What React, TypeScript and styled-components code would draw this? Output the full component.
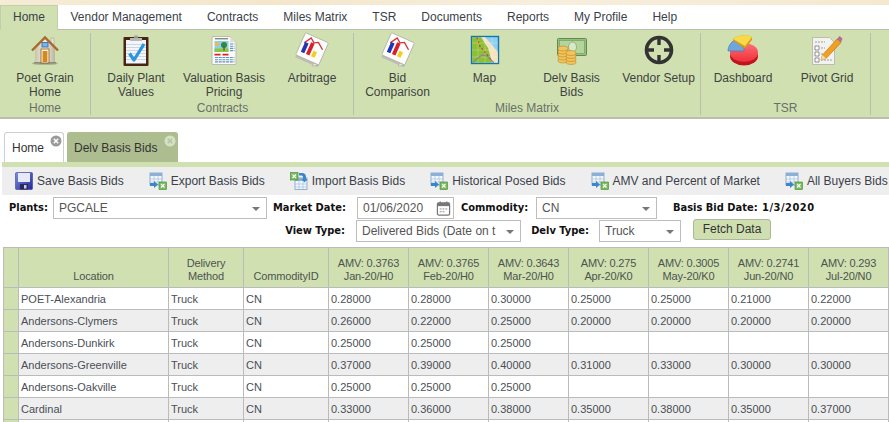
import React from "react";
import styled, { createGlobalStyle } from "styled-components";

const Global = createGlobalStyle`
  html, body { margin: 0; padding: 0; background: #fff; overflow: hidden; }
  body { font-family: "Liberation Sans", Arial, sans-serif; font-size: 12px; color: #333; }
`;
const Page = styled.div`width: 889px; height: 422px; overflow: hidden; position: relative;`;
const TopStrip = styled.div`height: 5px; background: linear-gradient(90deg,#f6ecd6,#f3e6cb 30%,#f7eedc 60%,#f4e8d0);`;
const MenuBar = styled.nav`display: flex; height: 25px; background: #fff; border-bottom: 1px solid #b9bfb0; box-sizing: border-box;`;
const MenuItem = styled.div<{ $active?: boolean }>`
  padding: 0 12.5px; line-height: 24px; color: #3a3f4a; height: ${p => p.$active ? 25 : 24}px;
  background: ${p => p.$active ? "#d1e0b1" : "transparent"};
  ${p => p.$active ? "border: 1px solid #c3cfab; border-bottom: 0; box-sizing: border-box; line-height: 22px; padding: 0 12px;" : ""}
`;
const Ribbon = styled.div`display: flex; height: 89px; box-sizing: border-box; background: #d1e0b1; border-bottom: 2px solid #b8bfb0;`;
const Group = styled.section<{ $w: number; $pl: number }>`
  width: ${p => p.$w}px; padding-left: ${p => p.$pl}px; box-sizing: border-box; display: flex; flex-direction: column;
  border-right: 1px solid #b7c0b0; margin: 3px 0; height: 82px; flex: none;
`;
const Items = styled.div`display: flex; height: 68px;`;
const Item = styled.div<{ $w: number }>`width: ${p => p.$w}px; flex: none; display: flex; flex-direction: column; align-items: center; text-align: center; line-height: 14px; color: #3d4340; white-space: pre-line;`;
const IconSlot = styled.div`height: 32px; width: 32px; margin: 1px 0 5px; svg { display: block; overflow: visible; }`;
const GroupLabel = styled.div`text-align: center; color: #687068; line-height: 14px;`;

const TabStrip = styled.div`display: flex; gap: 3px; padding: 13px 0 0 4px; height: 43px; box-sizing: border-box;`;
const DocTab = styled.div<{ $active?: boolean }>`
  position: relative; height: 30px; box-sizing: border-box; border-radius: 3px 3px 0 0; line-height: 30px; color: #333;
  padding: ${p => p.$active ? "0 19px 0 7px" : "0 20px 0 6px"};
  background: ${p => p.$active ? "#fff" : "#adbd8f"};
  border: 1px solid ${p => p.$active ? "#cfcfcf" : "#adbd8f"}; border-bottom: 0;
`;
const CloseDot = styled.span`
  position: absolute; right: 1px; top: 2px; width: 12px; height: 12px;
  svg { display: block; }
`;
const Panel = styled.div`margin-left: 2px; border-top: 5px solid #d1e0b1;`;
const Toolbar = styled.div`height: 28px; background: #eee; display: flex; align-items: center; padding-left: 13px; gap: 25px; white-space: nowrap; color: #3a3f4a;`;
const ToolButton = styled.div`display: flex; align-items: center; gap: 4px; flex: none; svg { display: block; }`;
const Filters = styled.div`margin-left: -2px; padding-top: 1px; height: 52px; box-sizing: border-box;`;
const FilterRow = styled.div<{ $pl: number; $h: number }>`display: flex; align-items: center; height: ${p => p.$h}px; padding-left: ${p => p.$pl}px; white-space: nowrap;`;
const FieldLabel = styled.label<{ $ml?: number; $w: number }>`
  font-family: "DejaVu Sans Condensed", "DejaVu Sans", sans-serif; font-weight: 700; font-size: 11px; color: #111;
  margin-left: ${p => p.$ml || 0}px; width: ${p => p.$w}px; flex: none; text-align: right; white-space: nowrap;
`;
const Select = styled.div<{ $w: number; $ml: number }>`
  width: ${p => p.$w}px; height: 22px; margin-left: ${p => p.$ml}px; box-sizing: border-box; border: 1px solid #bdbdbd; background: #fff; flex: none;
  position: relative; padding-left: 5px; line-height: 20px; color: #555; white-space: nowrap;
`;
const Caret = styled.i`
  position: absolute; right: 6px; top: 9px; width: 0; height: 0; border-left: 4px solid transparent; border-right: 4px solid transparent; border-top: 4px solid #777;
`;
const CalendarSlot = styled.span`position: absolute; right: 2px; top: 2px; svg { display: block; }`;
const BidDate = styled.span`font-family: "DejaVu Sans Condensed", "DejaVu Sans", sans-serif; font-weight: 700; font-size: 11px; letter-spacing: .5px; color: #111; margin-left: 6px;`;
const FetchButton = styled.button`
  width: 78px; height: 21px; margin: -3px 0 0 12px; padding: 0; border: 1px solid #a9b999; border-radius: 3px; background: #cfdfb0; color: #333;
  font: 12px "Liberation Sans", Arial, sans-serif;
`;

const Table = styled.table`
  border-collapse: collapse; table-layout: fixed; width: 885px; margin: 0 0 0 3px; font-family: "Liberation Sans", Arial, sans-serif; font-size: 11px;
`;
const Th = styled.th`
  height: 40px; box-sizing: border-box; padding: 0 2px 4px; background: #d1e0b1; border: 1px solid #bbb; font-weight: 400; color: #4c5450; line-height: 13px; letter-spacing: -.15px; vertical-align: bottom; text-align: center; white-space: pre-line;
`;
const Row = styled.tr<{ $odd: boolean }>`background: ${p => p.$odd ? "#eee" : "#fff"};`;
const Td = styled.td`height: 22px; box-sizing: border-box; padding: 1px 2px 0; border: 1px solid #bbb; color: #4a4f55; white-space: nowrap; overflow: hidden;`;
const Marker = styled.td`background: #d1e0b1; border: 1px solid #bbb; padding: 0;`;

const HomeIcon = () => (
  <svg width="32" height="32" viewBox="0 0 32 32">
    <defs><linearGradient id="wall" x1="0" x2="1"><stop offset="0" stopColor="#c8c3ae" /><stop offset=".5" stopColor="#f4f0e0" /><stop offset="1" stopColor="#b9b49e" /></linearGradient></defs>
    <rect x="22" y="4" width="3" height="8" fill="#e6e4d8" stroke="#a8a593" strokeWidth=".6" />
    <ellipse cx="16" cy="29.5" rx="13" ry="1.6" fill="#9aa38a" opacity=".7" />
    <path d="M6 14 16 5l10 9v15H6z" fill="url(#wall)" />
    <path d="M3 16.5 16 3.5l13 13" fill="none" stroke="#a8692a" strokeWidth="2.4" />
    <path d="M5 28h22v1.6H5z" fill="#8d8b7a" />
    <rect x="13" y="8.5" width="6" height="4.5" fill="#7fb2e6" stroke="#3f77b5" />
    <rect x="12" y="15" width="8" height="14" fill="#fff2d6" stroke="#8a5a20" strokeWidth=".8" />
    <rect x="13.6" y="17" width="4.8" height="11" fill="#d08a20" />
  </svg>
);
const ClipboardIcon = () => (
  <svg width="32" height="32" viewBox="0 0 32 32">
    <rect x="3.5" y="3" width="25" height="29" rx="1" fill="#4a2412" />
    <rect x="6" y="6" width="20" height="23.5" fill="#f2f5fa" />
    <path d="M6 10.5h20M6 13.5h20M6 16.5h20M6 19.5h20M6 22.5h20M6 25.5h20" stroke="#c3cddc" strokeWidth=".8" />
    <path d="M10 4h12v3H10z" fill="#b8b8b8" /><rect x="14" y="1.5" width="4" height="3" rx="1" fill="#9c9c9c" />
    <path d="M9.5 19.5 14 26 24 10" fill="none" stroke="#2b94dc" strokeWidth="3.2" strokeLinejoin="round" />
  </svg>
);
const ReportIcon = () => (
  <svg width="32" height="32" viewBox="0 0 32 32">
    <path d="M4 2.5h18L28 8.5v22H4z" fill="#fbfbf8" stroke="#b9bcae" />
    <path d="M22 2.5v6h6z" fill="#dfe2d8" />
    <path d="M7 4.7h13" stroke="#888" strokeWidth="1.4" />
    <rect x="6.5" y="7" width="14" height="11" fill="#8cd0ee" />
    <rect x="6.5" y="14.5" width="14" height="3.5" fill="#8cc646" />
    <circle cx="9" cy="10" r="2" fill="#f6b63c" />
    <circle cx="16" cy="11" r="3" fill="#2f8a3a" /><rect x="15.4" y="13" width="1.3" height="3.5" fill="#7a4a20" />
    <path d="M22 10h4.5M22 12.2h4.5M22 14.4h4.5M22 16.6h4.5M7 23.5h19.5M7 25.7h19.5M7 27.9h19.5" stroke="#5f93bf" strokeWidth="1.1" strokeDasharray="3 .7" />
    <path d="M6.5 20.6h6M14.5 20.6h6" stroke="#e02020" strokeWidth="1.6" />
  </svg>
);
const ChartNoteIcon = () => (
  <svg width="32" height="32" viewBox="0 0 32 32">
    <g transform="rotate(24 16 16) translate(16 16) scale(1.12) translate(-16 -16)">
      <rect x="5" y="6" width="22" height="22" fill="#bdbdb4" />
      <rect x="4.4" y="4.2" width="22.5" height="21.6" rx="1" fill="#fdfdfb" stroke="#b0b0a8" strokeWidth=".7" />
      <path d="M7 13 11 6.5l4 3 3.5-2 6 4.5" fill="none" stroke="#d6323a" strokeWidth="1.2" />
      <path d="M9.2 12v9.500" stroke="#1f35b8" strokeWidth="3.400" />
      <path d="M14.2 10v11.500" stroke="#d9202a" strokeWidth="3.400" />
      <path d="M19.2 16v5.500" stroke="#f2cf1e" strokeWidth="3.400" />
      <path d="M22 26h5l-5 3z" fill="#e8e8e2" stroke="#a9a9a0" strokeWidth=".5" />
    </g>
  </svg>
);
const MapIcon = () => (
  <svg width="32" height="32" viewBox="0 0 32 32">
    <rect x="2.5" y="2.5" width="27" height="27" fill="#8fd0f0" stroke="#1474b4" strokeWidth="1.4" />
    <path d="M3.2 3.2h9l7 11 4 14.6H3.2z" fill="#8dbf32" />
    <path d="M12.2 3.2h4l8 9 4.6 6v10.6H23.200l-4-14.600z" fill="#f4e3bd" />
    <path d="M8 3.500l3 9 6 7 5 6" fill="none" stroke="#d8262c" strokeWidth="1.2" strokeDasharray="2 2" />
    <path d="M9 3v26M16 3v26M23 3v26M3 9h26M3 16h26M3 23h26" stroke="#fff" strokeWidth=".4" opacity=".6" />
    <path d="M3.500 28.500 13 21l5 1 7 7" fill="none" stroke="#8a8d88" strokeWidth="1.400" />
  </svg>
);
const CashIcon = () => (
  <svg width="32" height="32" viewBox="0 0 32 32">
    <rect x="1.500" y="4.500" width="29" height="17" rx="1" fill="#97c07a" stroke="#5f8a54" />
    <rect x="3.500" y="6.500" width="25" height="13" fill="#b6d59c" stroke="#6f9a60" strokeWidth=".6" />
    <ellipse cx="16.500" cy="13" rx="4" ry="5" fill="#d9e9c8" stroke="#6f9a60" strokeWidth=".6" />
    <g fill="#f2c45c" stroke="#b98522" strokeWidth=".6">
      <ellipse cx="7" cy="26.500" rx="5" ry="2.400" /><ellipse cx="7" cy="23.500" rx="5" ry="2.400" /><ellipse cx="7" cy="20.500" rx="5" ry="2.400" /><ellipse cx="7" cy="17.500" rx="5" ry="2.400" /><ellipse cx="7" cy="14.500" rx="5" ry="2.400" />
      <ellipse cx="15" cy="28" rx="5" ry="2.400" /><ellipse cx="15" cy="25" rx="5" ry="2.400" /><ellipse cx="15" cy="22" rx="5" ry="2.400" /><ellipse cx="15" cy="19" rx="5" ry="2.400" />
    </g>
  </svg>
);
const TargetIcon = () => (
  <svg width="32" height="32" viewBox="0 0 32 32">
    <circle cx="16" cy="16" r="12.500" fill="none" stroke="#333" strokeWidth="3.600" />
    <path d="M16 5v6M16 21v6M5 16h6M21 16h6" stroke="#333" strokeWidth="3.400" />
  </svg>
);
const PieIcon = () => (
  <svg width="32" height="32" viewBox="0 0 32 32">
    <defs><linearGradient id="pie" x1="0" x2="0" y1="0" y2="1"><stop offset="0" stopColor="#ff7078" /><stop offset="1" stopColor="#ee3038" /></linearGradient></defs>
    <ellipse cx="17" cy="22" rx="14" ry="9.500" fill="#c2141e" />
    <ellipse cx="17" cy="18.500" rx="14" ry="9.500" fill="url(#pie)" />
    <path d="M1 17c0-5 3-9 7-11l9 8v3z" fill="#6fa5d8" stroke="#3b78b5" strokeWidth=".6" />
    <path d="M6 5c4-4 14-5 19-2v3l-7 8.500L6 6.500z" fill="#d79f16" />
    <path d="M6 5c4-4 14-5 19-2l-7 9z" fill="#f9d948" />
  </svg>
);
const PivotIcon = () => (
  <svg width="32" height="32" viewBox="0 0 32 32">
    <path d="M1.500 3.500h17l5 5v22h-22z" fill="#f2f3ee" stroke="#babdb0" />
    <path d="M4 12h4v4H4zM4 18h4v4H4zM4 24h4v4H4z" fill="#fff" stroke="#777" strokeWidth=".8" />
    <path d="M10 14h4M10 20h3M10 26h11M4 8h10" stroke="#888" strokeWidth=".8" strokeDasharray="2 1" />
    <path d="M11.500 21 26 5l4 3.500L15 24.500 10 26z" fill="#f2a11e" stroke="#b8660e" strokeWidth=".6" />
    <path d="M11.500 21 10 26l5-1.500z" fill="#f2dcb6" />
    <path d="M26 5l2.500-3 3 2.500-1.500 4z" fill="#b56a9a" />
  </svg>
);
const SaveIcon = () => (
  <svg width="18" height="18" viewBox="0 0 18 18">
    <defs><linearGradient id="fl" x1="0" x2="1" y1="0" y2="1"><stop offset="0" stopColor="#7a8fe0" /><stop offset="1" stopColor="#23279a" /></linearGradient></defs>
    <rect x=".5" y=".5" width="17" height="17" rx="1" fill="url(#fl)" stroke="#3c4294" strokeWidth=".6" />
    <rect x="3" y="1" width="12" height="9" fill="#e6e9f8" />
    <rect x="5" y="12" width="8" height="5.500" fill="#2a2a5a" /><rect x="9" y="13" width="2.500" height="3.500" fill="#ccd" />
  </svg>
);
const ExportIcon = () => (
  <svg width="18" height="18" viewBox="0 0 18 18">
    <rect x="1" y="1" width="12" height="12" fill="#f2f7fc" stroke="#7a9dc4" strokeWidth=".8" />
    <rect x="1" y="1" width="12" height="3" fill="#88b0d8" />
    <path d="M5 1v12M9 1v12M1 7h12M1 10h12" stroke="#9fb9d6" strokeWidth=".6" />
    <path d="M1 11h4V9l4 3.500L5 16v-2H1z" fill="#3a86cc" />
    <rect x="10" y="10" width="7.500" height="7.500" fill="#7cbb5c" stroke="#3e8a34" strokeWidth=".6" />
    <path d="m12 12 3.500 3.500m0-3.500L12 15.500" stroke="#fff" strokeWidth="1.100" />
  </svg>
);
const ImportIcon = () => (
  <svg width="18" height="18" viewBox="0 0 18 18">
    <rect x="5" y="6" width="12" height="11.500" fill="#f2f7fc" stroke="#7a9dc4" strokeWidth=".8" />
    <rect x="5" y="6" width="12" height="3" fill="#88b0d8" />
    <path d="M9 6v11M13 6v11M5 12h12M5 15h12" stroke="#9fb9d6" strokeWidth=".6" />
    <rect x=".5" y=".5" width="7.500" height="7.500" fill="#7cbb5c" stroke="#3e8a34" strokeWidth=".6" />
    <path d="m2.500 2.500 3.500 3.500m0-3.500L2.500 6" stroke="#fff" strokeWidth="1.100" />
    <path d="M9 1h3c3 0 4 2 4 4v2l1.500 0-3 3.500-3-3.500H13V5c0-1-1-1.500-2-1.500H9z" fill="#3a86cc" />
  </svg>
);
const Calendar = () => (
  <svg width="15" height="16" viewBox="0 0 16 16">
    <rect x="1.500" y="2.500" width="13" height="13" rx="1.500" fill="#fff" stroke="#777" strokeWidth="1.300" />
    <rect x="1.500" y="2.500" width="13" height="3.500" fill="#777" />
    <path d="M4.500 1v3M11.500 1v3" stroke="#777" strokeWidth="1.400" />
    <path d="M4 9h2M7 9h2M10 9h2M4 12h2M7 12h2" stroke="#888" />
  </svg>
);
const CloseIcon = ({ light }: { light?: boolean }) => (
  <svg width="12" height="12" viewBox="0 0 12 12">
    <circle cx="6" cy="6" r="5.500" fill={light ? "#d5e1c2" : "#9a9a9a"} />
    <path d="m3.800 3.800 4.400 4.400m0-4.400L3.800 8.200" stroke={light ? "#b4c49c" : "#fff"} strokeWidth="1.400" />
  </svg>
);

const menu = ["Home", "Vendor Management", "Contracts", "Miles Matrix", "TSR", "Documents", "Reports", "My Profile", "Help"];
const groups = [
  { label: "Home", w: 91, pl: 0, iw: 90, items: [{ t: "Poet Grain\nHome", I: HomeIcon }] },
  { label: "Contracts", w: 263, pl: 1, iw: 88, items: [{ t: "Daily Plant\nValues", I: ClipboardIcon }, { t: "Valuation Basis\nPricing", I: ReportIcon }, { t: "Arbitrage", I: ChartNoteIcon }] },
  { label: "Miles Matrix", w: 347, pl: 0, iw: 87, items: [{ t: "Bid\nComparison", I: ChartNoteIcon }, { t: "Map", I: MapIcon }, { t: "Delv Basis\nBids", I: CashIcon }, { t: "Vendor Setup", I: TargetIcon }] },
  { label: "TSR", w: 170, pl: 0, iw: 84, items: [{ t: "Dashboard", I: PieIcon }, { t: "Pivot Grid", I: PivotIcon }] },
];
const tools = [
  { t: "Save Basis Bids", I: SaveIcon }, { t: "Export Basis Bids", I: ExportIcon }, { t: "Import Basis Bids", I: ImportIcon },
  { t: "Historical Posed Bids", I: ExportIcon }, { t: "AMV and Percent of Market", I: ExportIcon }, { t: "All Buyers Bids", I: ExportIcon },
];
const widths = [15, 150, 75, 85, 80, 80, 80, 80, 80, 80, 80];
const heads = ["", "Location", "Delivery\nMethod", "CommodityID", "AMV: 0.3763\nJan-20/H0", "AMV: 0.3765\nFeb-20/H0", "AMV: 0.3643\nMar-20/H0", "AMV: 0.275\nApr-20/K0", "AMV: 0.3005\nMay-20/K0", "AMV: 0.2741\nJun-20/N0", "AMV: 0.293\nJul-20/N0"];
const rows = [
  ["POET-Alexandria", "0.28000", "0.28000", "0.30000", "0.25000", "0.25000", "0.21000", "0.22000"],
  ["Andersons-Clymers", "0.26000", "0.22000", "0.25000", "0.20000", "0.20000", "0.20000", "0.20000"],
  ["Andersons-Dunkirk", "0.25000", "0.25000", "0.25000", "", "", "", ""],
  ["Andersons-Greenville", "0.37000", "0.39000", "0.40000", "0.31000", "0.33000", "0.30000", "0.30000"],
  ["Andersons-Oakville", "0.25000", "0.25000", "0.25000", "", "", "", ""],
  ["Cardinal", "0.33000", "0.36000", "0.38000", "0.35000", "0.38000", "0.35000", "0.37000"],
];

export default function App() {
  return (
    <Page>
      <Global />
      <TopStrip />
      <MenuBar>
        {menu.map((m, i) => <MenuItem key={m} $active={i === 0}>{m}</MenuItem>)}
      </MenuBar>
      <Ribbon>
        {groups.map(g => (
          <Group key={g.label} $w={g.w} $pl={g.pl}>
            <Items>
              {g.items.map(({ t, I }) => (
                <Item key={t} $w={g.iw}>
                  <IconSlot><I /></IconSlot>
                  {t}
                </Item>
              ))}
            </Items>
            <GroupLabel>{g.label}</GroupLabel>
          </Group>
        ))}
      </Ribbon>
      <TabStrip>
        <DocTab $active>Home<CloseDot><CloseIcon /></CloseDot></DocTab>
        <DocTab>Delv Basis Bids<CloseDot><CloseIcon light /></CloseDot></DocTab>
      </TabStrip>
      <Panel>
        <Toolbar>
          {tools.map(({ t, I }) => <ToolButton key={t}><I />{t}</ToolButton>)}
        </Toolbar>
        <Filters>
          <FilterRow $pl={9} $h={23}>
            <FieldLabel $w={38}>Plants:</FieldLabel>
            <Select $w={214} $ml={6}>PGCALE<Caret /></Select>
            <FieldLabel $ml={6} $w={72}>Market Date:</FieldLabel>
            <Select $w={97} $ml={12}>01/06/2020<CalendarSlot><Calendar /></CalendarSlot></Select>
            <FieldLabel $ml={7} $w={67}>Commodity:</FieldLabel>
            <Select $w={121} $ml={8}>CN<Caret /></Select>
            <FieldLabel $ml={16} $w={83}>Basis Bid Date:</FieldLabel>
            <BidDate>1/3/2020</BidDate>
          </FilterRow>
          <FilterRow $pl={284} $h={23}>
            <FieldLabel $w={61}>View Type:</FieldLabel>
            <Select $w={165} $ml={11}>Delivered Bids (Date on t<Caret /></Select>
            <FieldLabel $ml={10} $w={58}>Delv Type:</FieldLabel>
            <Select $w={82} $ml={10}>Truck<Caret /></Select>
            <FetchButton>Fetch Data</FetchButton>
          </FilterRow>
        </Filters>
      </Panel>
      <Table>
        <colgroup>{widths.map((w, i) => <col key={i} width={w} />)}</colgroup>
        <thead><tr>{heads.map((h, i) => <Th key={i}>{h}</Th>)}</tr></thead>
        <tbody>
          {rows.map((r, i) => (
            <Row key={r[0]} $odd={i % 2 === 1}>
              <Marker />
              <Td>{r[0]}</Td><Td>Truck</Td><Td>CN</Td>
              {r.slice(1).map((v, j) => <Td key={j}>{v}</Td>)}
            </Row>
          ))}
          <Row $odd={false}>
            <Marker />
            {widths.slice(1).map((_, j) => <Td key={j} />)}
          </Row>
        </tbody>
      </Table>
    </Page>
  );
}
